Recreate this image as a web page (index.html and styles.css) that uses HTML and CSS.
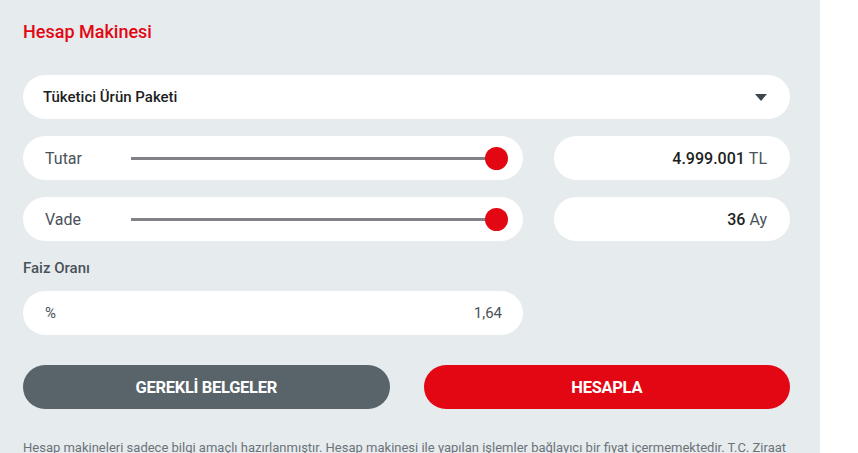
FILE: index.html
```html
<!DOCTYPE html>
<html>
	<head>
		<meta charset="UTF-8">
		<title>Hesap Makinesi</title>
		<link rel="stylesheet" href="styles.css">
	</head>
	<body>
		<div class="calc">
			<h2 class="title">Hesap Makinesi</h2>

			<div class="select">
				<span>Tüketici Ürün Paketi</span>
				<span class="caret"></span>
			</div>

			<div class="row">
				<div class="pill slider">
					<span class="label">Tutar</span>
					<div class="track"><span class="thumb"></span></div>
				</div>
				<div class="pill value"><b>4.999.001</b>&nbsp;TL</div>
			</div>

			<div class="row">
				<div class="pill slider">
					<span class="label">Vade</span>
					<div class="track"><span class="thumb"></span></div>
				</div>
				<div class="pill value"><b>36</b>&nbsp;Ay</div>
			</div>

			<div class="field-label">Faiz Oranı</div>
			<div class="row">
				<div class="pill rate">
					<span>%</span>
					<span>1,64</span>
				</div>
			</div>

			<div class="buttons">
				<a href="#" class="btn btn-gray">GEREKLİ BELGELER</a>
				<a href="#" class="btn btn-red">HESAPLA</a>
			</div>

			<p class="note">Hesap makineleri sadece bilgi amaçlı hazırlanmıştır. Hesap makinesi ile yapılan işlemler bağlayıcı bir fiyat içermemektedir. T.C. Ziraat Bankası A.Ş. şubelerinden güncel bilgi alabilirsiniz.</p>
		</div>
	</body>
</html>
```

FILE: styles.css
```css
* {
	margin: 0;
	padding: 0;
	box-sizing: border-box;
}

body {
	background: #fff;
	font-family: Roboto, "Liberation Sans", Arial, sans-serif;
	overflow: hidden;
}

.calc {
	width: 820px;
	height: 453px;
	background: #e6ebee;
	padding: 22px 30px 0 23px;
	overflow: hidden;
}

.title {
	color: #e30613;
	font-size: 18px;
	font-weight: 500;
	line-height: 20px;
}

.select {
	margin-top: 33px;
	height: 44px;
	background: #fff;
	border-radius: 22px;
	display: flex;
	align-items: center;
	justify-content: space-between;
	padding: 0 23px 0 20px;
	font-size: 15px;
	font-weight: 500;
	color: #1c1f22;
}

.caret {
	width: 0;
	height: 0;
	border-left: 6px solid transparent;
	border-right: 6px solid transparent;
	border-top: 7px solid #3d464d;
}

.row {
	margin-top: 17px;
	display: flex;
	gap: 31px;
}

.pill {
	height: 44px;
	background: #fff;
	border-radius: 22px;
	display: flex;
	align-items: center;
	font-size: 16px;
	color: #4a5259;
}

.slider {
	width: 500px;
	padding: 0 15px 0 22px;
}

.slider .label {
	width: 86px;
	flex: none;
}

.track {
	flex: 1;
	height: 3px;
	background: #808285;
	position: relative;
	margin-right: 11px;
}

.thumb {
	position: absolute;
	right: -11px;
	top: -10px;
	width: 23px;
	height: 23px;
	border-radius: 50%;
	background: #e30613;
}

.value {
	flex: 1;
	justify-content: flex-end;
	padding-right: 23px;
}

.value b {
	font-weight: 500;
	color: #1c1f22;
}

.field-label {
	margin-top: 18px;
	font-size: 15px;
	font-weight: 500;
	line-height: 18px;
	color: #4a5259;
}

.field-label + .row {
	margin-top: 14px;
}

.rate {
	width: 500px;
	justify-content: space-between;
	padding: 0 21px 0 22px;
	font-size: 15px;
}

.buttons {
	margin-top: 30px;
	display: flex;
	gap: 34px;
}

.btn {
	flex: 1;
	height: 44px;
	border-radius: 22px;
	display: flex;
	align-items: center;
	justify-content: center;
	color: #fff;
	text-decoration: none;
	font-size: 16.5px;
	font-weight: 700;
	letter-spacing: -0.3px;
}

.btn-gray {
	background: #58636a;
}

.btn-red {
	background: #e30613;
}

.note {
	margin-top: 30px;
	font-size: 13px;
	line-height: 18px;
	color: #6b7379;
}
```
